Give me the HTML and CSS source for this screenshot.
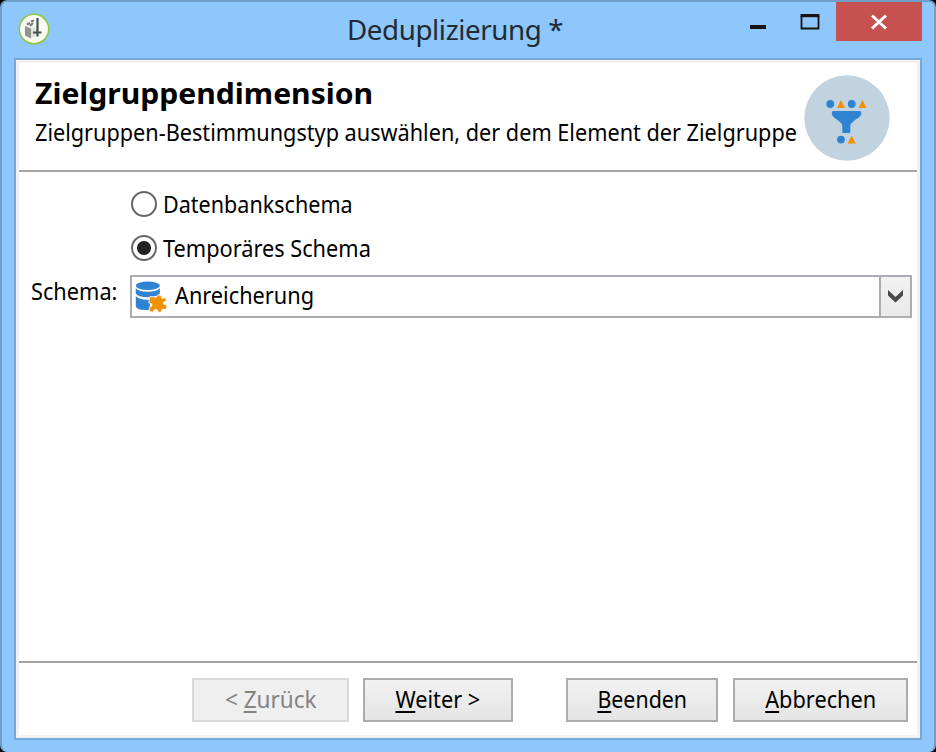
FILE: index.html
```
<!DOCTYPE html>
<html lang="de">
<head>
<meta charset="utf-8">
<title>Deduplizierung</title>
<link rel="stylesheet" href="styles.css">
</head>
<body>
<div class="window">
  <div class="titlebar">
    <svg class="app-icon" width="32" height="32" viewBox="0 0 32 32">
      <circle cx="16" cy="16" r="14.7" fill="#f8f9f5" stroke="#8fc63f" stroke-width="1.5"/>
      <path d="M7 13l6 2.500v10L7 22.500z" fill="#8f958e"/>
      <path d="M13 15.500l6-2.500v9l-6 3.500z" fill="#dfe2dd"/>
      <path d="M9 11.500l3-1.500M12 13l3-3M13 8.500l3-1" stroke="#778078" stroke-width="2.200"/>
      <path d="M19.500 5v15M15 19.500h8.500M19.500 19v4.500" stroke="#47504a" stroke-width="2.200" fill="none"/>
    </svg>
    <h1 class="window-title"><span>Deduplizierung *</span></h1>
    <div class="controls">
      <svg width="86" height="40" viewBox="0 0 86 40"><path d="M0 23h16v4H0z" fill="#17130f"/><path d="M51.500 14v12.500h17V14" fill="none" stroke="#17130f" stroke-width="1.800"/><path d="M50.600 12h18.800v3.200H50.600z" fill="#17130f"/></svg>
      <div class="close"><svg width="18" height="16" viewBox="0 0 18 16"><path d="M2 1.500l14 13M16 1.500l-14 13" stroke="#fff" stroke-width="3"/></svg></div>
    </div>
  </div>
  <div class="content">
    <header class="header">
      <div class="headings">
        <h2><span>Zielgruppendimension</span></h2>
        <p><span class="subtitle">Zielgruppen-Bestimmungstyp auswählen, der dem Element der Zielgruppe</span></p>
      </div>
      <svg class="badge" width="86" height="86" viewBox="0 0 86 86">
        <circle cx="43" cy="43" r="42.700" fill="#c2d3e0"/>
        <g fill="#2f83d3"><circle cx="26.300" cy="29" r="3.900"/><circle cx="47.700" cy="29" r="3.900"/><circle cx="37" cy="64.600" r="3.900"/>
        <path d="M29.500 36h26q1.800 0 1.800 2c0 4-4 5-7.500 8q-3.500 2.500-3.500 5v6q0 1-1 1h-6q-1 0-1-1v-6q0-2.500-3.500-5c-3.500-3-7-4-7-8q0-2 1.700-2z"/></g>
        <path d="M33 33l4-8 4 8zM54.500 33l4-8 4 8zM43.700 68.500l4-8 4 8z" fill="#f29100"/>
      </svg>
    </header>
    <main class="form">
      <label class="radio"><i class="dot"></i><span class="t-db">Datenbankschema</span></label>
      <label class="radio"><i class="dot checked"></i><span class="t-temp">Temporäres Schema</span></label>
      <div class="field">
        <label><span class="t-schema">Schema:</span></label>
        <div class="select">
          <svg width="32" height="32" viewBox="0 0 32 32">
            <g fill="#2f83d3"><ellipse cx="12.800" cy="4.700" rx="12" ry="4.200"/><path d="M.8 7q2.500 3.800 12 3.800T24.800 7v5.500q-2.500 3.800-12 3.800T.8 12.500z"/><path d="M.8 15q2.500 3.700 12 3.700l2-.1v10.200q-14 1-14-4z"/></g>
            <path d="M15 15.500l4 .2q1.500 1.500 3-.2l1-1.700 3 .4.800 3 3.800-.5.900 3.500-3 .8v2l3.500 1.500-.7 4-3.800-.5-2 3.500-2.500-.5-1-2.500-2.500.2-1.500 2.500-4-1 .5-4 2.500-1.500-.3-2-3-1z" fill="#f29100" stroke="#fff" stroke-width=".8"/>
          </svg>
          <span class="t-value">Anreicherung</span>
          <div class="arrow"><svg width="15" height="13" viewBox="0 0 15 13"><path d="M0 0l7.500 7L15 0v5.500L7.500 12.500 0 5.500z" fill="#4a4a4a"/></svg></div>
        </div>
      </div>
    </main>
    <footer class="footer">
      <button class="back" disabled><span>&lt; <u>Z</u>urück</span></button>
      <button class="next"><span><u>W</u>eiter &gt;</span></button>
      <button class="finish"><span><u>B</u>eenden</span></button>
      <button class="cancel"><span><u>A</u>bbrechen</span></button>
    </footer>
  </div>
</div>
</body>
</html>
```
FILE: styles.css
```
* { box-sizing: border-box; }
body { margin: 0; background: #000; color: #000; font: 23px/32px "Noto Sans", sans-serif; }
h1, h2, p { margin: 0; font-weight: 400; }
span { display: inline-block; white-space: nowrap; transform: scaleX(.945); transform-origin: left; }
svg { display: block; flex: none; }
.window { width: 936px; height: 752px; padding: 0 12px 10px; background: #8dc7fb; border: 2px solid #6f9fc9; border-bottom: 2px solid #8dc7fb; border-radius: 7px; }
.titlebar { height: 56px; display: grid; grid-template-columns: 333px 1fr 173px; }
.app-icon { margin: 11px 0 0 4px; }
.window-title { font-size: 28px; line-height: 36px; padding-top: 9px; color: #222a33; }
.window-title span { letter-spacing: -.4px; transform: scaleX(.99); }
.controls { display: flex; margin-left: 1px; }
.close { width: 86px; flex: none; height: 39px; background: #c75050; display: grid; place-items: center; }
.content { height: 682px; padding: 2px; border: 2px solid #75a9d7; background: #fff; box-shadow: inset 0 0 0 3px #f3f0ef; display: flex; flex-direction: column; }
.header { height: 110px; margin: 0 1px; border-bottom: 2px solid #a2a2a2; display: flex; flex: none; }
.headings { width: 785px; padding: 13px 0 0 16px; }
h2 { font-size: 28px; font-weight: 700; line-height: 36px; }
h2 span { transform: scaleX(1.074); }
.headings p { margin-top: 5px; line-height: 32px; }
.subtitle { transform: scaleX(.942); }
.badge { margin-top: 13px; }
.form { flex: 1; padding: 15px 6px 0 13px; }
.radio { display: flex; align-items: center; height: 34px; margin: 0 0 10px 100px; }
.dot { width: 26px; height: 26px; border: 2px solid #666; border-radius: 50%; margin-right: 6px; flex: none; }
.dot.checked { background: radial-gradient(circle, #222 6.500px, #fff 7.500px); }
.radio span { margin-top: -1px; }
.t-db { transform: scaleX(.937); }
.field { display: flex; margin-top: 0; }
.field label { width: 98px; }
.select { flex: 1; height: 43px; margin: 0 0 0 1px; border: 2px solid #abadb3; display: flex; align-items: center; padding-left: 3px; }
.t-value { margin: -3px 0 0 8px; }
.arrow { margin-left: auto; width: 31px; height: 39px; border-left: 2px solid #acacac; background: linear-gradient(#f2f2f2, #e9e9e9); display: grid; place-items: center; }
.footer { height: 75px; border-top: 2px solid #a2a2a2; margin: 0 1px; display: flex; padding: 15px 0 0 173px; }
button { font: inherit; color: #000; height: 44px; padding: 0 0 3px; border: 2px solid #acacac; background: linear-gradient(#f2f2f2, #e4e4e4); }
button span { transform-origin: center; }
button:disabled { color: #838383; border-color: #d9d9d9; background: #efefef; }
.back { width: 157px; }
.back span { transform: scaleX(.98); }
.next { width: 150px; margin-left: 14px; }
.finish { width: 152px; margin-left: 53px; }
.finish span { transform: scaleX(.93); }
.cancel { width: 175px; margin-left: 15px; }
u { text-decoration-thickness: 2px; text-underline-offset: 3px; text-decoration-skip-ink: none; }
```
